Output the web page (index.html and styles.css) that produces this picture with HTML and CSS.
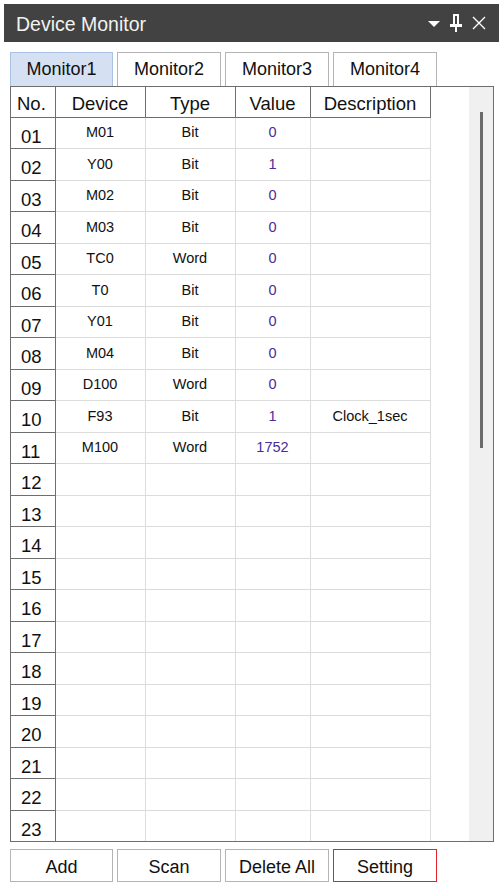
FILE: index.html
```html
<!DOCTYPE html>
<html>
<head>
<meta charset="utf-8">
<link rel="stylesheet" href="styles.css">
</head>
<body>
<div class="titlebar">
  <span class="title">Device Monitor</span>
  <div class="tools">
    <svg class="ico" width="14" height="10" viewBox="0 0 14 10"><path d="M1 3 L13 3 L7 9 Z" fill="#fff"/></svg>
    <svg class="ico" width="14" height="20" viewBox="0 0 14 20"><path d="M4 1 H10 V11 H13 V14 H8 V19 H6 V14 H1 V11 H4 Z M6 3 V11 H8 V3 Z" fill="#fff" fill-rule="evenodd"/></svg>
    <svg class="ico" width="16" height="16" viewBox="0 0 16 16"><path d="M2 2 L14 14 M14 2 L2 14" stroke="#fff" stroke-width="1.4"/></svg>
  </div>
</div>
<div class="content">
  <div class="tabs">
    <div class="tab active">Monitor1</div>
    <div class="tab">Monitor2</div>
    <div class="tab">Monitor3</div>
    <div class="tab">Monitor4</div>
  </div>
  <div class="frame">
    <div class="grid-area">
      <table class="grid">
        <colgroup><col class="c-no"><col class="c-dev"><col class="c-type"><col class="c-val"><col class="c-desc"></colgroup>
        <thead>
          <tr><th class="h-no">No.</th><th>Device</th><th>Type</th><th>Value</th><th>Description</th></tr>
        </thead>
        <tbody>
          <tr><td class="no">01</td><td>M01</td><td>Bit</td><td class="val">0</td><td></td></tr>
          <tr><td class="no">02</td><td>Y00</td><td>Bit</td><td class="val">1</td><td></td></tr>
          <tr><td class="no">03</td><td>M02</td><td>Bit</td><td class="val">0</td><td></td></tr>
          <tr><td class="no">04</td><td>M03</td><td>Bit</td><td class="val">0</td><td></td></tr>
          <tr><td class="no">05</td><td>TC0</td><td>Word</td><td class="val">0</td><td></td></tr>
          <tr><td class="no">06</td><td>T0</td><td>Bit</td><td class="val">0</td><td></td></tr>
          <tr><td class="no">07</td><td>Y01</td><td>Bit</td><td class="val">0</td><td></td></tr>
          <tr><td class="no">08</td><td>M04</td><td>Bit</td><td class="val">0</td><td></td></tr>
          <tr><td class="no">09</td><td>D100</td><td>Word</td><td class="val">0</td><td></td></tr>
          <tr><td class="no">10</td><td>F93</td><td>Bit</td><td class="val">1</td><td>Clock_1sec</td></tr>
          <tr><td class="no">11</td><td>M100</td><td>Word</td><td class="val">1752</td><td></td></tr>
          <tr><td class="no">12</td><td></td><td></td><td></td><td></td></tr>
          <tr><td class="no">13</td><td></td><td></td><td></td><td></td></tr>
          <tr><td class="no">14</td><td></td><td></td><td></td><td></td></tr>
          <tr><td class="no">15</td><td></td><td></td><td></td><td></td></tr>
          <tr><td class="no">16</td><td></td><td></td><td></td><td></td></tr>
          <tr><td class="no">17</td><td></td><td></td><td></td><td></td></tr>
          <tr><td class="no">18</td><td></td><td></td><td></td><td></td></tr>
          <tr><td class="no">19</td><td></td><td></td><td></td><td></td></tr>
          <tr><td class="no">20</td><td></td><td></td><td></td><td></td></tr>
          <tr><td class="no">21</td><td></td><td></td><td></td><td></td></tr>
          <tr><td class="no">22</td><td></td><td></td><td></td><td></td></tr>
          <tr><td class="no">23</td><td></td><td></td><td></td><td></td></tr>
        </tbody>
      </table>
    </div>
    <div class="scroll"><div class="thumb"></div></div>
  </div>
  <div class="buttons">
    <div class="btn">Add</div>
    <div class="btn">Scan</div>
    <div class="btn">Delete All</div>
    <div class="btn setting">Setting</div>
  </div>
</div>
</body>
</html>
```
FILE: styles.css
```css
html, body {
  margin: 0;
  padding: 0;
  background: #fff;
  font-family: "Liberation Sans", Arial, sans-serif;
  color: #111;
}
.titlebar {
  margin: 4px 5px 0 4px;
  height: 38px;
  background: #424242;
  display: flex;
  align-items: center;
  justify-content: space-between;
  padding: 0 12px 0 12px;
  box-sizing: border-box;
}
.title {
  color: #f2f2f2;
  font-size: 19.5px;
  padding-top: 3px;
}
.tools {
  display: flex;
  align-items: center;
  gap: 8px;
}
.content {
  padding: 10px 10px 0 10px;
}
.tabs {
  display: flex;
  gap: 4px;
  height: 34px;
}
.tab {
  width: 104px;
  box-sizing: border-box;
  border: 1px solid #b4b4b4;
  border-bottom: none;
  background: #fff;
  display: flex;
  align-items: center;
  justify-content: center;
  font-size: 18px;
}
.tab.active {
  width: 103px;
  background: #d5e1f3;
  border-color: #a9c1e4;
}
.frame {
  display: flex;
  width: 484px;
  height: 756px;
  box-sizing: border-box;
  border: 1px solid #6e6e6e;
}
.grid-area {
  flex: 1;
  overflow: hidden;
}
.scroll {
  width: 24px;
  background: #f0f0f0;
  display: flex;
  justify-content: center;
}
.thumb {
  width: 3px;
  height: 336px;
  margin-top: 25px;
  background: #6b6b6b;
}
.grid {
  border-collapse: collapse;
  table-layout: fixed;
  width: 419px;
}
.c-no { width: 44px; }
.c-dev { width: 90px; }
.c-type { width: 90px; }
.c-val { width: 75px; }
.c-desc { width: 120px; }
.grid th {
  height: 30px;
  padding: 5px 0 0 0;
  font-weight: normal;
  font-size: 18.5px;
  border-right: 1px solid #6e6e6e;
  border-bottom: 1px solid #6e6e6e;
  text-align: center;
  box-sizing: border-box;
}
.grid th.h-no {
  text-align: left;
  padding-left: 6px;
}
.grid td {
  height: 31.5px;
  padding: 0 0 1px 0;
  font-size: 14.5px;
  text-align: center;
  border-right: 1px solid #dcdcdc;
  border-bottom: 1px solid #dcdcdc;
  box-sizing: border-box;
}
.grid td.no {
  font-size: 18.5px;
  text-align: left;
  padding: 8px 0 0 10px;
  border-right: 1px solid #6e6e6e;
  border-bottom: 1px solid #6e6e6e;
}
.grid td.val {
  color: #4a2c9c;
}
.buttons {
  display: flex;
  gap: 4px;
  margin-top: 7px;
}
.btn {
  width: 104px;
  height: 33px;
  box-sizing: border-box;
  border: 1px solid #b4b4b4;
  display: flex;
  align-items: center;
  justify-content: center;
  font-size: 18px;
  padding-top: 3px;
}
.btn:first-child { width: 103px; }
.btn.setting {
  border-color: #e3232b;
}
```
